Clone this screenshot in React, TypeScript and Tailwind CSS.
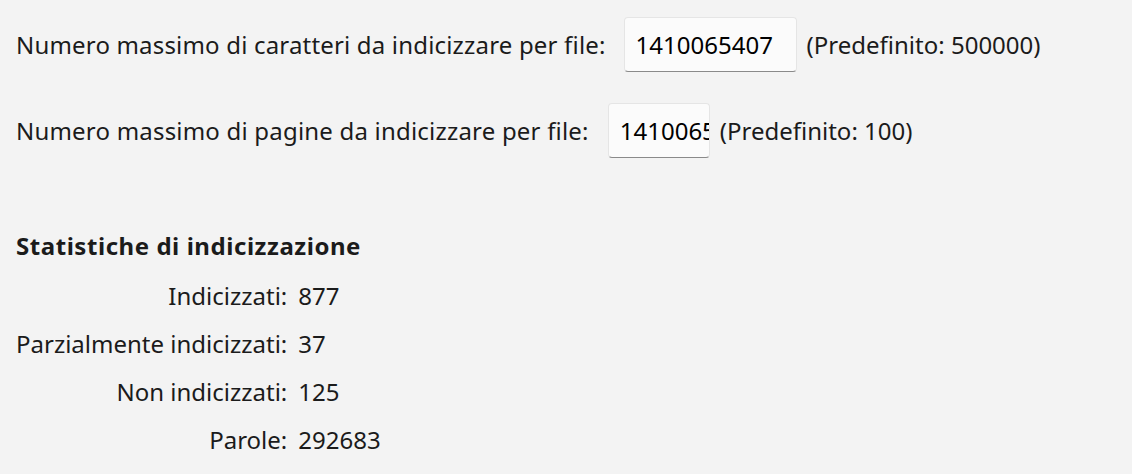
import React from 'react';

const stats = [
  { label: 'Indicizzati:', value: '877' },
  { label: 'Parzialmente indicizzati:', value: '37' },
  { label: 'Non indicizzati:', value: '125' },
  { label: 'Parole:', value: '292683' },
];

function NumberBox({ value, width }: { value: string; width: string }) {
  return (
    <div
      className={`${width} h-[55px] shrink-0 overflow-hidden rounded-[4px] border border-[#e5e5e5] border-b-[#8a8a8a] bg-[#fbfbfb] pl-[11px] flex items-center whitespace-nowrap text-black`}
    >
      {value}
    </div>
  );
}

export default function App() {
  return (
    <div
      className="min-h-screen w-[1132px] h-[474px] bg-[#f3f3f3] text-[#1b1b1b] text-[24px] pl-[16px] pt-[17px]"
      style={{ fontFamily: '"Noto Sans", "Open Sans", sans-serif' }}
    >
      {/* limiti */}
      <div className="flex items-center h-[55px]">
        <span className="tracking-[0.18px]">Numero massimo di caratteri da indicizzare per file:</span>
        <div className="ml-[18px]">
          <NumberBox value="1410065407" width="w-[173px]" />
        </div>
        <span className="ml-[10px]">(Predefinito: 500000)</span>
      </div>
      <div className="flex items-center h-[55px] mt-[31px]">
        <span className="tracking-[0.2px]">Numero massimo di pagine da indicizzare per file:</span>
        <div className="ml-[19px]">
          <NumberBox value="1410065407" width="w-[102px]" />
        </div>
        <span className="ml-[10px]">(Predefinito: 100)</span>
      </div>

      {/* statistiche */}
      <div className="mt-[72px] h-[32px] leading-[32px] font-bold tracking-[0.55px]">Statistiche di indicizzazione</div>
      <div className="mt-[10px] grid grid-cols-[auto_auto] justify-start gap-x-[11px]">
        {stats.map((s) => (
          <React.Fragment key={s.label}>
            <div className="h-[48px] leading-[48px] text-right">{s.label}</div>
            <div className="h-[48px] leading-[48px]">{s.value}</div>
          </React.Fragment>
        ))}
      </div>
    </div>
  );
}
